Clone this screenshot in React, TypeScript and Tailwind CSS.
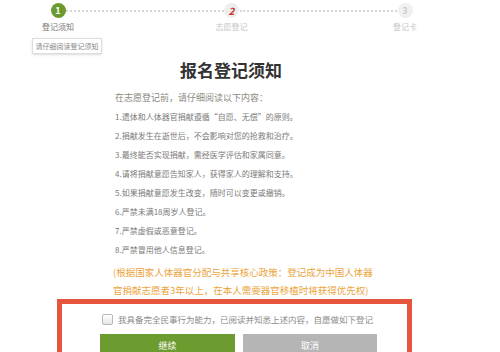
import React from "react";

const steps = [
  { n: "1", label: "登记须知", state: "done" },
  { n: "2", label: "志愿登记", state: "current" },
  { n: "3", label: "登记卡", state: "todo" },
];

const rules = [
  "1.遗体和人体器官捐献遵循“自愿、无偿”的原则。",
  "2.捐献发生在逝世后，不会影响对您的抢救和治疗。",
  "3.最终能否实现捐献，需经医学评估和家属同意。",
  "4.请将捐献意愿告知家人，获得家人的理解和支持。",
  "5.如果捐献意愿发生改变，随时可以变更或撤销。",
  "6.严禁未满18周岁人登记。",
  "7.严禁虚假或恶意登记。",
  "8.严禁冒用他人信息登记。",
];

const StepCircle = ({ n, state }: { n: string; state: string }) => {
  if (state === "done")
    return (
      <div className="w-[15px] h-[15px] rounded-full bg-[#6b9a30] flex items-center justify-center text-white text-[9px] font-bold">
        {n}
      </div>
    );
  if (state === "current")
    return (
      <div className="w-[15px] h-[15px] rounded-full bg-[#eeeeee] flex items-center justify-center text-[#c6362c] text-[10px] font-bold italic">
        {n}
      </div>
    );
  return (
    <div className="w-[15px] h-[15px] rounded-full bg-[#f0f0f0] flex items-center justify-center text-[#cccccc] text-[9px] font-bold">
      {n}
    </div>
  );
};

const App = () => {
  return (
    <div
      className="w-[500px] h-[352px] overflow-hidden bg-white"
      style={{ fontFamily: '"Noto Sans CJK SC", "Noto Sans", sans-serif' }}
    >
      {/* stepper */}
      <div className="flex ml-[38px] w-[387px] pt-[3px]">
        {steps.map((s, i) => (
          <React.Fragment key={s.n}>
            {i > 0 && (
              <div className="flex-1 -mx-[12px] mt-[7px] h-0 border-t-2 border-dotted border-[#d6d6d6]" />
            )}
            <div className="w-[40px] flex flex-col items-center relative z-10">
              <StepCircle n={s.n} state={s.state} />
              <p
                className={
                  "mt-[4px] text-[8px] leading-[10px] whitespace-nowrap " +
                  (s.state === "done" ? "text-[#777777]" : "text-[#c4c4c4]")
                }
              >
                {s.label}
              </p>
            </div>
          </React.Fragment>
        ))}
      </div>
      <div className="ml-[32px] mt-[6px] w-[70px] h-[16px] border border-[#dddddd] flex items-center justify-center text-[7px] text-[#888888] whitespace-nowrap shadow-sm">
        请仔细阅读登记须知
      </div>

      {/* title */}
      <h1 className="w-[462px] mt-[6px] text-center text-[17px] leading-[20px] font-bold text-[#333333]">
        报名登记须知
      </h1>

      {/* notice */}
      <div className="ml-[115px] mt-[8px]">
        <p className="text-[9px] leading-[19px] text-[#8c8a7e]">
          在志愿登记前，请仔细阅读以下内容：
        </p>
        {rules.map((r) => (
          <p key={r} className="text-[8px] leading-[19px] text-[#7a7a7a] whitespace-nowrap">
            {r}
          </p>
        ))}
        <p className="-ml-[2px] mt-[4px] text-[9.5px] leading-[18px] text-[#eba43c] whitespace-nowrap">
          (根据国家人体器官分配与共享核心政策：登记成为中国人体器
          <br />
          官捐献志愿者3年以上，在本人需要器官移植时将获得优先权)
        </p>
      </div>

      {/* consent box */}
      <div className="ml-[57px] w-[355px] border-[5px] border-[#e4553b] pt-[8px] pb-[6px]">
        <label className="flex items-center ml-[40px] h-[14px]">
          <span className="w-[11px] h-[11px] rounded-[2px] border border-[#b8b8b8] bg-gradient-to-b from-white to-[#e6e6e6]" />
          <span className="ml-[5px] text-[8.5px] text-[#8a8a8a] whitespace-nowrap">
            我具备完全民事行为能力，已阅读并知悉上述内容，自愿做如下登记
          </span>
        </label>
        <div className="flex ml-[38px] mt-[8px] gap-[8px]">
          <button className="w-[135px] h-[24px] bg-[#6c9b2f] text-white text-[9px] flex items-center justify-center">
            继续
          </button>
          <button className="w-[134px] h-[24px] bg-[#b5b5b5] text-white text-[9px] flex items-center justify-center">
            取消
          </button>
        </div>
      </div>
    </div>
  );
};

export default App;
